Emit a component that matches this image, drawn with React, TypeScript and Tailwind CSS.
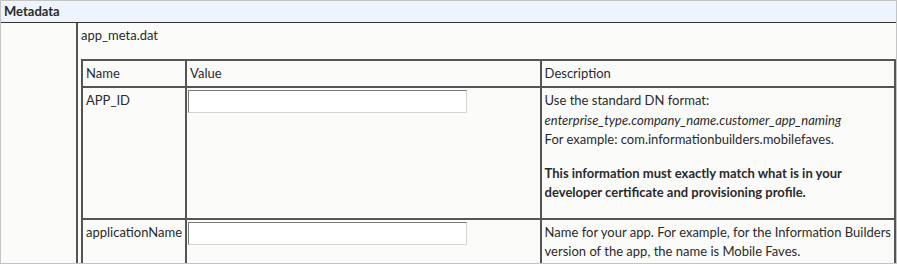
export default function App() {
  const cell = "border-2 border-[#555] px-[3px] py-[3px] align-top text-left font-normal";
  const inputCls =
    "-mt-px block h-[23px] w-[279px] border border-t-[#7a7a7a] border-l-[#7a7a7a] border-b-[#d4d4d4] border-r-[#d4d4d4] bg-white";

  return (
    <div className="w-[897px] h-[264px] overflow-hidden border border-[#c4c4c4] bg-[#fbfcfa] text-[13px] leading-[19.5px] text-[#2a2a2a] font-['Lato','Open_Sans',sans-serif]">
      <div className="h-[21px] bg-[#edf4fc] px-[3px] font-bold leading-[21px]">
        Metadata
      </div>
      <div className="flex border-t border-[#333]">
        <div className="w-[77px] shrink-0 border-r-2 border-r-[#555]" />
        <div className="flex-1 pl-[3px] pt-[3px]">
          <p className="mb-[13px]">app_meta.dat</p>
          <table className="w-full border-collapse">
            <thead>
              <tr>
                <th className={`${cell} w-[100px]`}>Name</th>
                <th className={`${cell} w-[356px]`}>Value</th>
                <th className={cell}>Description</th>
              </tr>
            </thead>
            <tbody>
              <tr>
                <td className={cell}>APP_ID</td>
                <td className={`${cell} pl-[1px]`}>
                  <input type="text" className={inputCls} />
                </td>
                <td className={`${cell} pb-[15px]`}>
                  <p>Use the standard DN format:</p>
                  <p className="italic">enterprise_type.company_name.customer_app_naming</p>
                  <p>For example: com.informationbuilders.mobilefaves.</p>
                  <p className="mt-[14px] font-bold">
                    This information must exactly match what is in your
                    <br />
                    developer certificate and provisioning profile.
                  </p>
                </td>
              </tr>
              <tr>
                <td className={cell}>applicationName</td>
                <td className={`${cell} pl-[1px]`}>
                  <input type="text" className={inputCls} />
                </td>
                <td className={`${cell} whitespace-nowrap`}>
                  Name for your app. For example, for the Information Builders
                  <br />
                  version of the app, the name is Mobile Faves.
                </td>
              </tr>
            </tbody>
          </table>
        </div>
      </div>
    </div>
  );
}
